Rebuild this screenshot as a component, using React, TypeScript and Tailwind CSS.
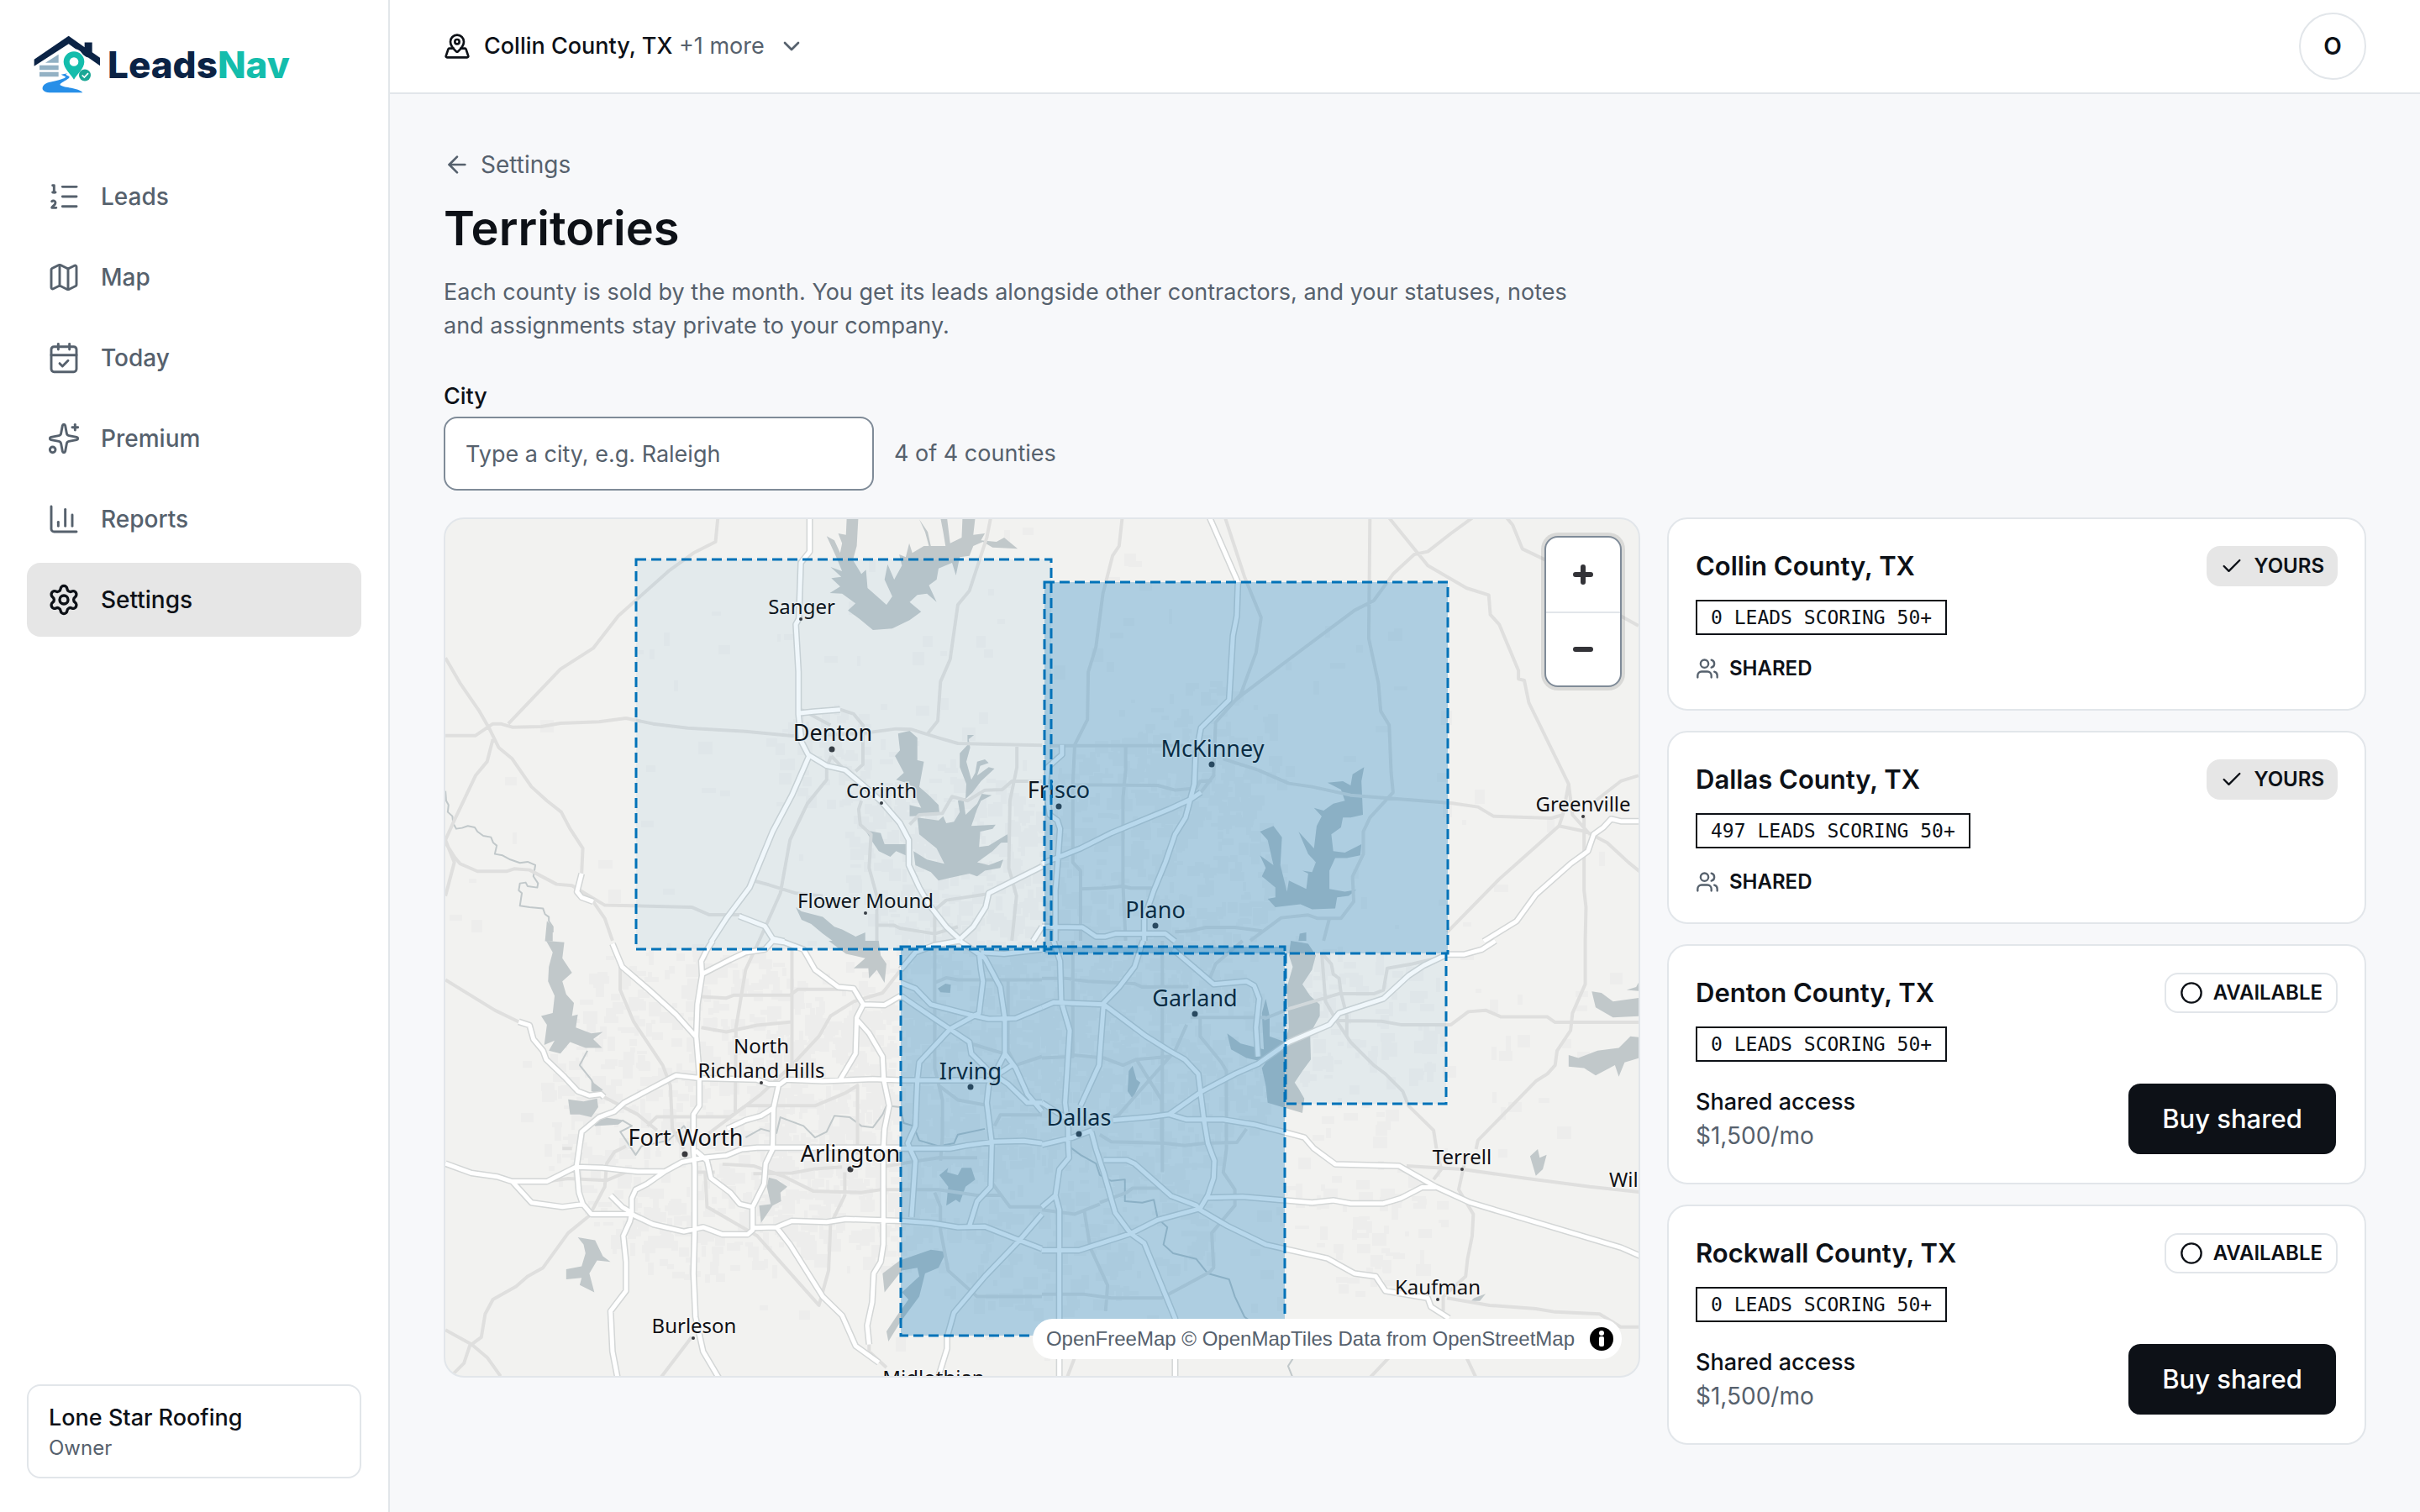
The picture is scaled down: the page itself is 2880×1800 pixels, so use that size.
import { useState } from 'react'
import clsx from 'clsx'
import {
  ArrowLeft,
  CalendarCheck,
  ChartColumn,
  Check,
  ChevronDown,
  Circle,
  ListOrdered,
  Map as MapIcon,
  MapPinned,
  Settings,
  Sparkles,
  Users,
  type LucideIcon,
} from 'lucide-react'

type NavItem = {
  label: string
  icon: LucideIcon
  active?: boolean
}

type County = {
  name: string
  leads: number
  owned: boolean
  price?: string
}

type Tile = {
  transform: string
  water: string
  rivers: string
  roads: string
  motorways: string
}

type Place = {
  name: string
  x: number
  y: number
  big?: boolean
  dot?: [number, number]
  anchor?: 'start' | 'middle'
}

const NAV_ITEMS: NavItem[] = [
  { label: 'Leads', icon: ListOrdered },
  { label: 'Map', icon: MapIcon },
  { label: 'Today', icon: CalendarCheck },
  { label: 'Premium', icon: Sparkles },
  { label: 'Reports', icon: ChartColumn },
  { label: 'Settings', icon: Settings, active: true },
]

const COUNTIES: County[] = [
  { name: 'Collin County, TX', leads: 0, owned: true },
  { name: 'Dallas County, TX', leads: 497, owned: true },
  { name: 'Denton County, TX', leads: 0, owned: false, price: '$1,500/mo' },
  { name: 'Rockwall County, TX', leads: 0, owned: false, price: '$1,500/mo' },
]

// Each tile keeps its own local grid and is placed by its transform.
const TILES: Tile[] = [
  {
    transform: 'translate(-10 -18) scale(.4592 .3333)',
    water:
      'M1062 50L1092 50L1088 150L1078 200L1100 250L1112 235L1116 300L1145 335L1165 360L1180 330L1170 300L1160 270L1168 215L1185 270L1205 220L1198 180L1215 190L1224 140L1232 175L1262 150L1275 150L1265 100L1250 55L1272 100L1280 150L1318 150L1312 100L1305 50H1322L1330 140L1360 120L1362 50H1395L1390 110L1420 105L1410 130L1450 135L1470 120L1505 160L1440 155L1415 135L1390 150L1380 185L1355 190L1345 255L1335 210L1300 230L1295 270L1275 290L1295 350L1270 320L1245 325L1225 350L1255 385L1225 415L1180 445L1130 450L1095 410L1065 380L1085 355L1050 320L1018 318L1045 295L1022 265L1048 260L1020 225L1050 240L1035 190L1010 115L1030 130L1045 175L1050 140L1040 105L1060 110Z' +
      'M1195 820L1225 810L1245 835V915L1262 920L1250 1010L1275 1040L1300 1075L1303 1110L1225 1115V1075L1255 1085L1225 1000L1190 985L1210 960L1187 900L1200 880Z' +
      'M1245 1120L1300 1130L1312 1115L1320 1140L1340 1135L1355 1100L1350 1060L1370 1050L1372 1000L1355 940V890L1375 860V825L1392 825L1378 840L1382 870L1372 920L1385 985L1395 960L1400 920L1420 912L1430 925L1408 935L1400 970L1430 940L1445 945L1410 990L1388 1030L1365 1060L1370 1110L1400 1070L1412 1035L1438 1040L1410 1060L1400 1090L1385 1150L1448 1145L1440 1160L1408 1170L1405 1225L1430 1220L1478 1180L1488 1210L1462 1210L1440 1240L1400 1280L1430 1290L1468 1270L1460 1300L1420 1310L1400 1330L1380 1320L1330 1335L1300 1345L1280 1315L1240 1290L1235 1240L1270 1270L1315 1285L1295 1230L1250 1180Z' +
      'M1110 1165L1150 1175L1160 1215L1220 1215L1215 1255L1190 1240L1175 1260L1145 1240L1130 1210Z' +
      'M930 1440L945 1455L1000 1475L1030 1510L1050 1520L1085 1545L1110 1530V1575H1040L1000 1535L970 1500L945 1485Z' +
      'M285 1490L300 1510V1562H280Z',
    rivers:
      'M22 1025L24 1060L30 1075L28 1100L40 1115L42 1140L50 1160L65 1157L80 1150L98 1155L105 1170L120 1185L140 1190L146 1210L155 1220L150 1250L170 1255L190 1270L215 1282L235 1278L255 1290L250 1330L262 1355L260 1370L235 1365L230 1352L215 1355L212 1380L220 1390L215 1435L240 1440L275 1445L280 1465L290 1475L290 1490L300 1510V1530',
    roads:
      'M22 550L60 640L110 740L135 800L160 870L195 910L245 1010L285 1060L322 1100L345 1160L378 1230L375 1320' +
      'M22 827H100L145 785H165L195 797L270 795L320 783L420 778L490 765L560 785L650 800L800 812L920 828L1100 820L1190 803L1230 805L1300 835L1350 855L1440 858L1568 862' +
      'M728 50L722 135L665 175L600 240L470 400L405 515L320 590L185 785' +
      'M145 840L130 920L100 970L45 1130L22 1200L45 1280L22 1400' +
      'M22 1210L45 1260L60 1285L105 1312H180L200 1303L240 1307L310 1358L350 1363L435 1433L660 1440L705 1467H790' +
      'M405 1420L435 1480L455 1560M1435 50L1425 120L1380 310L1350 360L1330 555L1305 635L1298 775L1272 820' +
      'M1045 734L1080 750L1104 790V930L1085 955M945 735L1020 790M1022 900L1050 940M1022 900L1010 940V985L960 1070L915 1200L890 1390L835 1560' +
      'M825 1347L860 1360L930 1390L1000 1400M1100 1060L1093 1090L1097 1145L1125 1180L1120 1300L1140 1400V1560' +
      'M1225 1145L1250 1110L1310 1105L1335 1045L1375 1060L1420 1022L1465 1020L1490 990H1568' +
      'M1503 862V940L1485 1060L1482 1300L1502 1400L1490 1560M1290 1560V1450L1320 1415L1430 1392M1140 1505H1185L1200 1515L1290 1535L1350 1510',
    motorways:
      'M966 50V170L943 210L938 410L930 430L937 600V750L945 850L962 895L1010 935L1058 950L1105 1005L1150 1060L1200 1140L1223 1200V1290L1250 1370L1275 1430L1320 1510L1355 1555' +
      'M966 895L920 1040L870 1170L810 1370L750 1480L710 1565M935 748L975 742L1045 734' +
      'M1568 1295L1430 1390L1422 1440L1390 1510L1355 1555M375 1320L363 1385L375 1405L405 1420M783 1472L850 1508L870 1552L900 1562M1568 1510L1545 1560',
  },
  {
    transform: 'translate(710 -18) scale(.4592 .3333)',
    water:
      'M835 940L828 990L832 1110L800 1120L780 1120L775 1155L750 1180L755 1240L785 1245L828 1215L825 1255L790 1265L760 1265L745 1310V1375L785 1385L815 1378L795 1400L765 1405L760 1445L700 1448L670 1430L605 1440L585 1410L605 1405V1370L570 1330L580 1300L565 1255L600 1290L585 1200L565 1170L600 1150L622 1190L618 1290L635 1385L640 1345L685 1375L690 1320L675 1310L700 1315L710 1280L690 1250L665 1170L705 1230L712 1150L725 1115L705 1085L730 1095L755 1070L785 1060L775 1020L740 995L780 990L800 1005L805 965Z' +
      'M668 1535L685 1530V1560H665Z',
    rivers: '',
    roads:
      'M208 50L200 150L183 185L158 320L140 510L120 600L118 770L85 860L80 1000V1280L100 1310V1560' +
      'M475 50L525 260L568 405L555 530L515 680L450 780L445 970L412 1030' +
      'M1115 50L1060 105L1000 170L965 180L910 250L860 345L810 380L640 555L520 680L485 720' +
      'M900 50L1000 220L1100 300L1158 325L1162 395L1185 430L1235 595V625L1250 630L1262 710L1365 1000L1350 1110L1340 1150L1185 1340L1050 1530' +
      'M850 50L847 480L872 640L878 740L900 790L905 960L910 1030L850 1120L833 1170V1250L805 1330L808 1420L775 1480H715L690 1468L620 1478L540 1560' +
      'M20 863H370M470 910L560 950L640 998L700 1010L800 1040L1060 1068L1130 1082L1170 1115L1320 1122L1350 1110' +
      'M80 1003L300 1005L345 1022L400 1015L410 990L440 988M217 863V950L210 1050V1360L217 1560M100 1375L160 1372L210 1365L230 1372H290' +
      'M345 1528L385 1525L425 1512H500L570 1525M745 1480L730 1560M1205 50L1220 75L1245 160L1305 200L1500 400L1546 435' +
      'M1546 970L1500 990L1435 1060M1365 1000L1375 1110L1420 1180M1340 1150L1410 1170L1465 1210L1520 1280L1560 1325M1405 1110V1380L1410 1440L1408 1560',
    motorways:
      'M435 50L508 280L505 400L495 470L485 700L412 800L398 900L395 1000L372 1120L345 1180L320 1280L290 1380L265 1480V1560' +
      'M0 1285L100 1230L180 1175L330 1090L385 1055L412 1030M52 860V895L15 940L10 1000L20 1110L40 1130L47 1160L42 1260L35 1380V1560' +
      'M0 1510L105 1512L140 1545H165L190 1535H320L345 1562M1560 1133H1500L1475 1125L1455 1155L1430 1180L1415 1240L1370 1285L1280 1395L1230 1490L1145 1562',
  },
  {
    transform: 'translate(-10 502) scale(.4592 .3444)',
    water:
      'M283 0L330 5L325 60L350 110L325 140L335 185L355 215L350 260L365 255L360 300L400 320L430 315L405 340L428 370L385 370L345 350L320 390L290 380L305 345L278 360L285 290L270 260L300 250L305 190L288 140L290 90L300 40Z' +
      'M340 548L380 555L415 545L418 575L400 610L370 600L345 600ZM400 625L440 612L485 620L470 635L410 640ZM400 485L430 515L420 530L400 520Z' +
      'M365 1025L410 1035L430 1090L450 1110L415 1105L395 1150L408 1215L370 1190L375 1165L335 1170L335 1135L375 1125L385 1080L380 1050Z' +
      'M860 818L880 825L908 850L890 870L892 900L870 915L840 975L835 915L865 910L855 850Z' +
      'M1015 0H1145L1150 50L1165 80L1160 145L1140 100L1120 130L1118 95L1080 95L1110 60L1060 45Z' +
      'M1302 810L1325 785L1322 800L1350 810L1360 785L1385 785L1395 825L1370 850L1355 905L1345 895L1320 915L1325 850Z' +
      'M1320 1075L1300 1130L1265 1150L1250 1230L1200 1320L1170 1385L1165 1350L1190 1300L1222 1240L1205 1215L1250 1160L1245 1130L1205 1140L1160 1215L1155 1150L1200 1105L1280 1068Z' +
      'M1298 165L1318 148L1332 152L1330 180L1305 178Z',
    rivers:
      'M390 380L370 430L400 480L415 520M480 620L505 640L475 660L490 690L515 740L530 710L600 690L640 640L670 700' +
      'M800 680L840 650L880 665L890 610L950 640L980 680L1010 660L1030 605L1070 610L1100 640L1130 645L1155 600L1165 570L1200 575L1210 630L1235 640L1250 690L1300 710L1340 700L1350 670L1420 650',
    roads:
      'M22 135L150 240L212 280M475 80V170L510 280L585 430L605 500L610 650L640 720M835 0L800 100L775 300L773 600M920 30V440' +
      'M685 193L750 198L770 188H915L935 168H1080M685 300L750 315L830 292L920 280M1202 100L1155 180L1080 210L1020 260L990 330L920 430L840 530L700 670' +
      'M433 540L520 600L570 655M545 640L570 608H760L800 570H980L1060 525L1090 500V740M325 718H350' +
      'M490 710L460 730L440 770L435 850L395 950L340 1010L275 1130L235 1160L205 1195L145 1240L125 1290L115 1370L85 1400L70 1460L40 1500' +
      'M285 832L340 822L440 828L490 800M740 772L820 778L900 815L975 865L1100 870L1150 860H1300L1400 880H1460' +
      'M820 805L920 803L980 788L1050 782M1057 800V880L1020 980L1015 1140L990 1260L830 1020L700 920L695 800M675 800H720M660 1370L580 1510' +
      'M22 1345L90 1395L130 1440L165 1505M1120 1395V1420L1165 1475' +
      'M1290 0V440L1310 550V680L1305 760M1290 145L1320 128L1350 135H1568M1480 140V380L1500 430L1568 400M1300 500L1350 550L1430 570M1370 350L1470 390' +
      'M1445 640L1460 602H1568M1160 780L1250 760L1300 750H1400M1290 870L1305 920V1000L1325 1140L1400 1230H1568M1440 840L1485 920H1568',
    motorways:
      'M715 0L700 30L685 70L687 120L675 220L672 330L680 460V570L665 600V720L668 780V1000L665 1150L670 1300L690 1420L730 1510' +
      'M455 10L480 90L550 170L620 255L670 330M687 115L760 65L800 40L850 30L870 0L900 5L950 30L980 100L1040 160L1080 165L1105 220L1160 222L1202 190' +
      'M1105 220L1088 265L1085 390L1045 480M1090 275L1120 320L1155 400L1158 480L1172 570L1160 650L1157 720V1050L1150 1110L1132 1150L1128 1250L1115 1330L1120 1395' +
      'M680 475L620 465L485 560L460 590L420 610L375 660L362 780L368 870L378 910L400 945H505L560 980L640 1005L690 990L740 1015H805L818 1000V920L848 840L852 770L870 720L872 580L885 500' +
      'M680 475L830 480L860 495H890L905 480L1000 485L1130 478L1202 482M752 650L800 620L840 605L872 578' +
      'M22 770L90 803L155 815L195 832H285L360 782L430 785L520 798H590L635 765L690 750L750 742L790 720L830 715H1202' +
      'M195 832L245 905L325 920L380 910M590 798L545 840L515 860L505 890V940L500 970L483 1020L490 1110V1210L450 1280L455 1420L468 1510' +
      'M450 880L480 920L505 940M670 725L700 760L710 820L760 870L785 910L818 920M818 992L880 990L920 968L1010 972L1060 962L1202 968' +
      'M880 990L915 1050L1000 1230L1050 1295L1085 1400L1145 1458M212 280L240 292L250 340L275 380L283 410L330 470L365 520L395 535L425 530L433 540' +
      'M1202 145L1240 165L1280 220L1380 255L1430 270L1500 268L1568 230M1202 190L1290 270L1380 350L1385 390L1430 450L1480 495L1530 560H1568' +
      'M1405 40L1410 100L1415 140L1405 250L1330 305L1250 420L1245 480L1240 640L1220 700L1240 760L1230 955' +
      'M1355 0L1420 60L1460 160L1472 270V390L1500 440L1530 530L1568 590M1202 482H1430L1490 430' +
      'M1472 390L1430 500L1425 560L1438 700L1435 850L1400 900L1380 985M1202 718H1330L1370 708L1440 695L1520 692L1568 700' +
      'M1202 968L1280 975L1350 990L1420 988L1510 1035L1568 1065M1568 945L1510 1035L1420 1160L1340 1285L1322 1370V1410L1300 1505' +
      'M1202 100L1240 40L1290 15L1355 0M1410 40L1470 45L1568 30',
  },
  {
    transform: 'translate(710 502) scale(.4592 .3444)',
    water:
      'M645 0L690 10L710 50L700 100L675 150L695 190L720 220V260L695 320L697 410L675 450L655 490L665 510L680 545L675 595L585 560L580 500L570 440L580 420L530 405L490 375L480 320L515 355L575 375L570 250L580 200L590 260L590 330L630 350L640 300L635 160L650 90L640 50Z' +
      'M235 432L245 480L255 490L235 545L222 520L225 450ZM1425 175L1450 180L1480 210L1560 195V260L1480 265L1435 230Z' +
      'M1365 395L1390 405L1440 380L1495 370L1525 330L1560 335V400L1510 420L1495 470L1485 430L1435 465L1405 440L1365 435Z' +
      'M1560 110L1540 160L1515 170L1560 175ZM1285 720L1290 750L1308 740L1298 790L1280 812L1265 745ZM1120 1235L1150 1220L1135 1245L1112 1245Z',
    rivers:
      'M60 700L100 740L140 770L150 810L180 830L215 825L215 900L260 905L290 895L300 960L325 990L315 1050L340 1080L400 1100L430 1150L485 1170L500 1230L525 1300L535 1310M650 1445L638 1470L650 1510',
    roads:
      'M80 0V400L0 405M80 395L160 405L210 430L245 410L330 400M0 130H60L120 140L240 148L260 160L380 158M312 0V800M520 0L450 80L435 130' +
      'M725 40L735 210L765 280L800 350L860 430L890 460L935 520L950 570L1015 655L1025 740L1035 790L1015 825' +
      'M730 50L750 80L755 115L770 130L775 180L790 260V330M575 270L640 235L740 195L770 183H860L885 170L895 95L960 80L1040 55' +
      'M765 275L880 278L930 290H1060L1105 245L1150 240L1190 263H1310L1330 282H1560M1408 0V150L1375 250L1370 310L1335 380L1330 430L1310 460L1280 485L1130 690L1125 720' +
      'M385 265H580M410 265V330L465 420L478 450V720L470 800L500 860V915L440 1010L445 1130L435 1145L310 1235H180L110 1222H0' +
      'M375 290L345 380L200 600L185 610M245 410L310 550V690M150 670L180 695L320 700L370 708L420 700L505 697L530 650' +
      'M150 905L220 870L235 855H320M0 930L85 945L150 910M110 935L125 1060L170 1190L165 1280M945 778L1090 790L1250 820L1420 850L1560 870' +
      'M1100 740L1080 860L1118 945L1115 1020L1103 1100L1098 1160L1040 1230V1280M1050 1235L1160 1260L1280 1272L1330 1283L1445 1290L1500 1335H1560' +
      'M85 1440L65 1510M900 1440L850 1510M1100 1440L1125 1510',
    motorways:
      'M30 0L47 70L50 210L72 310L60 560L68 650V700L70 750L45 790L35 880L45 930V1510' +
      'M0 230L30 213L160 220L200 260L270 330L330 380L370 410L405 460L420 620L430 700L447 760L445 820L430 880L410 925L300 965L230 1012L95 1070H0' +
      'M262 0L240 90L200 160L160 215L148 430L100 570M340 30L445 150L530 140L550 155L563 200L555 300L560 400' +
      'M1175 0L1140 30L1095 47H1050L990 85L950 120L885 200L770 250L745 290L640 350L560 425L500 460L415 520L330 600L285 608L185 620' +
      'M330 600L375 618H470L550 635L630 662L680 680L705 718L760 772L925 778L1020 850L1110 905L1500 1060L1560 1095' +
      'M430 888L520 885L610 895L700 905L755 897L800 908H885L930 890L985 852H1020' +
      'M128 660L140 720L160 800L190 940L230 1012L265 1045L345 1305V1510' +
      'M160 758H220L240 770L335 882L400 915L410 930L480 985L580 1050L740 1098L810 1150L865 1160L890 1210L1000 1235L1008 1265L1055 1305' +
      'M0 705L80 680L130 655M35 880L0 920M0 560L60 610',
  },
]

const PLACES: Place[] = [
  { name: 'Sanger', x: 424, y: 113, dot: [423, 119] },
  { name: 'Denton', x: 461, y: 264, big: true, dot: [460, 274] },
  { name: 'Corinth', x: 519, y: 332, dot: [519, 338] },
  { name: 'Flower Mound', x: 500, y: 463, dot: [500, 469] },
  { name: 'Frisco', x: 730, y: 332, big: true, dot: [730, 342] },
  { name: 'McKinney', x: 913, y: 283, big: true, dot: [912, 292] },
  { name: 'Plano', x: 845, y: 475, big: true, dot: [845, 484] },
  { name: 'Greenville', x: 1354, y: 348, dot: [1354, 354] },
  { name: 'Garland', x: 892, y: 580, big: true, dot: [892, 589] },
  { name: 'Dallas', x: 754, y: 722, big: true, dot: [754, 732] },
  { name: 'Irving', x: 625, y: 667, big: true, dot: [625, 676] },
  { name: 'North', x: 376, y: 636 },
  { name: 'Richland Hills', x: 376, y: 665, dot: [376, 671] },
  { name: 'Fort Worth', x: 286, y: 746, big: true, dot: [285, 756] },
  { name: 'Arlington', x: 482, y: 765, big: true, dot: [482, 774] },
  { name: 'Burleson', x: 296, y: 969, dot: [295, 975] },
  { name: 'Midlothian', x: 581, y: 1031 },
  { name: 'Terrell', x: 1210, y: 768, dot: [1210, 774] },
  { name: 'Kaufman', x: 1181, y: 923, dot: [1181, 929] },
  { name: 'Wills Point', x: 1385, y: 795, anchor: 'start' },
]

// Built-up areas: centre, radii and number of blocks.
const URBAN = [
  [830, 420, 160, 170, 420],
  [640, 620, 170, 150, 420],
  [840, 640, 150, 140, 360],
  [300, 700, 190, 200, 520],
  [480, 720, 130, 170, 360],
  [700, 820, 210, 120, 260],
  [590, 400, 120, 110, 200],
  [460, 280, 70, 60, 60],
  [1090, 590, 110, 90, 80],
  [910, 280, 90, 90, 120],
  [1080, 800, 110, 120, 70],
  [700, 500, 700, 500, 260],
]

function buildBlocks() {
  let seed = 7
  const next = () => {
    seed = (seed * 16807) % 2147483647
    return seed / 2147483647
  }
  let d = ''
  for (const [cx, cy, rx, ry, count] of URBAN) {
    for (let i = 0; i < count; i++) {
      const angle = next() * Math.PI * 2
      const r = Math.sqrt(next())
      const w = Math.round(4 + next() * 14)
      const h = Math.round(4 + next() * 14)
      d += `M${Math.round(cx + Math.cos(angle) * r * rx)} ${Math.round(cy + Math.sin(angle) * r * ry)}h${w}v${h}h-${w}z`
    }
  }
  return d
}

const BLOCKS = buildBlocks()

// Rockwall leaves its top edge open, as it shares that line with Collin.
const TERRITORIES = [
  { name: 'Denton', d: 'M227 48H721V512H227Z', owned: false },
  { name: 'Rockwall', d: 'M1000 517V696H1191V517', owned: false },
  { name: 'Collin', d: 'M713 75H1193V517H713Z', owned: true },
  { name: 'Dallas', d: 'M542 509H999V972H542Z', owned: true },
]

function Logo() {
  return (
    <a href="#home" className="flex items-center gap-2" aria-label="LeadsNav home">
      <svg viewBox="0 0 240 206" className="h-[69px] w-[80px]" aria-hidden="true">
        <path
          d="M2 86L125 2L182 42V25H209V60L237 80V108L195 79Q180 75 170 60Q165 52 150 48L125 30L2 110Z"
          fill="#0b2345"
        />
        <path d="M42 98L89 68V98ZM21 107H89V123H21ZM21 131H89V147H21Z" fill="#93b1c4" />
        <path
          fillRule="evenodd"
          d="M144 57A37 37 0 0 0 107 95C107 118 134 140 144 158C154 140 181 118 181 95A37 37 0 0 0 144 57ZM144 78A16 16 0 1 1 144 110A16 16 0 1 1 144 78Z"
          fill="#14bdac"
        />
        <path
          d="M122 135L98 140L110 146C124 150 100 158 62 166C40 170 30 180 32 192Q38 204 58 204H175C160 186 110 188 96 178C88 170 128 158 128 148C128 142 104 142 122 135Z"
          fill="#278fe8"
        />
        <circle cx="183" cy="142" r="21" fill="#1aa795" />
        <path d="M173 142L181 150L195 135" fill="none" stroke="#fff" strokeWidth="5" />
      </svg>
      <span className="text-[44px] leading-[64px] font-extrabold text-[#0b2345]">
        Leads<span className="text-[#14bdac]">Nav</span>
      </span>
    </a>
  )
}

function Sidebar() {
  return (
    <aside className="sticky top-0 flex h-screen w-[464px] shrink-0 flex-col border-r-2 border-[#e2e6ea] bg-white px-8 pb-10">
      <div className="flex h-[190px] items-start px-2 pt-[42px]">
        <Logo />
      </div>
      <nav className="flex flex-1 flex-col gap-2" aria-label="Main">
        {NAV_ITEMS.map(({ label, icon: Icon, active }) => (
          <a
            key={label}
            href={`#${label.toLowerCase()}`}
            aria-current={active ? 'page' : undefined}
            className={clsx(
              'flex h-[88px] items-center gap-6 rounded-2xl px-6 text-[28px] leading-10 font-medium',
              active ? 'bg-[#e6e6e6] text-[#0d1117]' : 'text-[#56616d]',
            )}
          >
            <Icon className="size-10" strokeWidth={active ? 2 : 1.75} />
            {label}
          </a>
        ))}
      </nav>
      <div className="rounded-2xl border-2 border-[#e2e6ea] px-6 py-[18px]">
        <p className="text-[27px] leading-10 font-medium text-[#0d1117]">Lone Star Roofing</p>
        <p className="text-2xl text-[#56616d]">Owner</p>
      </div>
    </aside>
  )
}

function TopBar() {
  return (
    <header className="flex h-28 items-center justify-between border-b-2 border-[#e2e6ea] bg-white px-16">
      <button type="button" className="flex items-center gap-4 text-[27px] leading-10 text-[#56616d]">
        <MapPinned className="size-8 text-[#0d1117]" />
        <span>
          <span className="font-medium text-[#0d1117]">Collin County, TX</span> +1 more
        </span>
        <ChevronDown className="size-8" />
      </button>
      <button
        type="button"
        aria-label="Account"
        className="size-20 rounded-full border-2 border-[#e2e6ea] text-[28px] font-semibold text-[#0d1117]"
      >
        O
      </button>
    </header>
  )
}

function TerritoryMap() {
  return (
    <div className="relative h-[1024px] overflow-hidden rounded-3xl border-2 border-[#e2e6ea] bg-[#f2f2f0]">
      <svg
        viewBox="0 0 1420 1020"
        preserveAspectRatio="xMidYMid slice"
        className="size-full"
        role="img"
        aria-label="Map of county territories"
      >
        <path d={BLOCKS} fill="#ededec" />
        <g fill="none" strokeLinejoin="round">
          {TILES.map((tile) => (
            <g key={tile.transform} transform={tile.transform}>
              <path d={tile.water} fill="#c1c8ca" />
              <path d={tile.rivers} stroke="#c1c8ca" strokeWidth="2" vectorEffect="non-scaling-stroke" />
            </g>
          ))}
          {TILES.map((tile) => (
            <g key={tile.transform} transform={tile.transform}>
              <path d={tile.roads} stroke="#dfdfde" strokeWidth="4" vectorEffect="non-scaling-stroke" />
            </g>
          ))}
          {TILES.map((tile) => (
            <g key={tile.transform} transform={tile.transform}>
              <path d={tile.motorways} stroke="#d3d6d6" strokeWidth="8" vectorEffect="non-scaling-stroke" />
            </g>
          ))}
          {TILES.map((tile) => (
            <g key={tile.transform} transform={tile.transform}>
              <path d={tile.motorways} stroke="#fff" strokeWidth="5" vectorEffect="non-scaling-stroke" />
            </g>
          ))}
        </g>
        <g className="font-['Noto_Sans',sans-serif]" fill="#101014">
          {PLACES.map((place) => (
            <g key={place.name}>
              {place.dot && (
                <circle cx={place.dot[0]} cy={place.dot[1]} r={place.big ? 3.5 : 2} fill="#3a3a3e" />
              )}
              <text
                x={place.x}
                y={place.y}
                textAnchor={place.anchor ?? 'middle'}
                fontSize={place.big ? 27 : 24}
                stroke="#f6f6f5"
                strokeWidth="3"
                strokeOpacity="0.8"
                paintOrder="stroke"
              >
                {place.name}
              </text>
            </g>
          ))}
        </g>
        {TERRITORIES.map((territory) => (
          <path
            key={territory.name}
            d={territory.d}
            fill="#0072bc"
            fillOpacity={territory.owned ? 0.28 : 0.06}
            stroke="#0072b8"
            strokeWidth="3"
            strokeDasharray="12 6"
          />
        ))}
      </svg>

      <div className="absolute top-5 right-5 flex w-[92px] flex-col rounded-2xl border-2 border-[#7f8b98] bg-white ring-4 ring-black/10">
        <button type="button" aria-label="Zoom in" className="flex h-[88px] items-center justify-center">
          <svg viewBox="0 0 24 24" className="size-6" fill="none" stroke="#333338" strokeWidth="6" strokeLinecap="round">
            <path d="M12 3V21M3 12H21" />
          </svg>
        </button>
        <button
          type="button"
          aria-label="Zoom out"
          className="flex h-[88px] items-center justify-center border-t-2 border-[#e2e6ea]"
        >
          <svg viewBox="0 0 24 24" className="size-6" fill="none" stroke="#333338" strokeWidth="6" strokeLinecap="round">
            <path d="M3 12H21" />
          </svg>
        </button>
      </div>

      <div className="absolute right-5 bottom-5 flex h-12 items-center gap-4 rounded-full bg-white pr-2 pl-4 font-['Liberation_Sans',sans-serif] text-2xl text-[#56616d]">
        <p>
          <a href="#openfreemap">OpenFreeMap</a> <a href="#openmaptiles">© OpenMapTiles</a> Data from{' '}
          <a href="#openstreetmap">OpenStreetMap</a>
        </p>
        <button type="button" aria-label="Toggle attribution">
          <svg viewBox="0 0 32 32" className="size-8">
            <circle cx="16" cy="16" r="14" fill="#000" />
            <circle cx="16" cy="9" r="3" fill="#fff" />
            <rect x="13" y="13" width="6" height="12" rx="2" fill="#fff" />
          </svg>
        </button>
      </div>
    </div>
  )
}

function StatusBadge({ owned }: { owned: boolean }) {
  const Icon = owned ? Check : Circle
  return (
    <span
      className={clsx(
        'flex h-12 items-center gap-3 rounded-2xl px-4 text-2xl font-semibold text-[#0d1117]',
        owned ? 'bg-[#e6e6e6]' : 'border-2 border-[#e2e6ea]',
      )}
    >
      <Icon className="size-7" />
      {owned ? 'YOURS' : 'AVAILABLE'}
    </span>
  )
}

function CountyCard({ county }: { county: County }) {
  return (
    <li className="rounded-3xl border-2 border-[#e2e6ea] bg-white p-8 text-[#0d1117]">
      <div className="flex items-center justify-between">
        <h2 className="text-[31px] leading-10 font-semibold">{county.name}</h2>
        <StatusBadge owned={county.owned} />
      </div>
      <p className="mt-4 w-fit border-2 border-[#0d1117] px-4 py-1 font-['DejaVu_Sans_Mono',monospace] text-[23px] leading-[30px]">
        {county.leads} LEADS SCORING 50+
      </p>
      {county.owned ? (
        <p className="mt-6 flex items-center gap-3 text-2xl font-semibold">
          <Users className="size-7 text-[#56616d]" />
          SHARED
        </p>
      ) : (
        <div className="mt-6 flex items-center justify-between">
          <div className="leading-10">
            <p className="text-[27px] font-medium">Shared access</p>
            <p className="text-[28px] text-[#56616d]">{county.price}</p>
          </div>
          <button
            type="button"
            className="h-[88px] rounded-2xl border-2 border-transparent bg-[#0d1117] bg-clip-padding px-10 text-[31px] leading-10 font-medium text-white"
          >
            Buy shared
          </button>
        </div>
      )}
    </li>
  )
}

export default function App() {
  const [city, setCity] = useState('')

  return (
    <div className="flex min-h-screen bg-[#f7f8fa] font-['Inter',sans-serif] text-[#0d1117]">
      <Sidebar />
      <div className="min-w-0 flex-1">
        <TopBar />
        <main className="px-16 pt-16 pb-20">
          <a href="#settings" className="flex w-fit items-center gap-3 text-[28px] leading-10 text-[#56616d]">
            <ArrowLeft className="size-8" />
            Settings
          </a>
          <h1 className="mt-5 text-[56px] leading-[72px] font-semibold">Territories</h1>
          <p className="mt-5 max-w-[1344px] text-[27px] leading-10 text-[#56616d]">
            Each county is sold by the month. You get its leads alongside other contractors, and your
            statuses, notes and assignments stay private to your company.
          </p>
          <label htmlFor="city" className="mt-11 block text-[27px] leading-10 font-medium">
            City
          </label>
          <div className="mt-1 flex items-center gap-6">
            <input
              id="city"
              value={city}
              onChange={(event) => setCity(event.target.value)}
              placeholder="Type a city, e.g. Raleigh"
              className="h-[88px] w-[512px] rounded-2xl border-2 border-[#7f8b98] bg-white px-6 text-[27px] placeholder:text-[#56616d]"
            />
            <p className="text-[27px] leading-10 text-[#56616d]">4 of 4 counties</p>
          </div>
          <div className="mt-8 grid grid-cols-[minmax(0,1fr)_832px] items-start gap-8">
            <TerritoryMap />
            <ul className="flex flex-col gap-6">
              {COUNTIES.map((county) => (
                <CountyCard key={county.name} county={county} />
              ))}
            </ul>
          </div>
        </main>
      </div>
    </div>
  )
}
